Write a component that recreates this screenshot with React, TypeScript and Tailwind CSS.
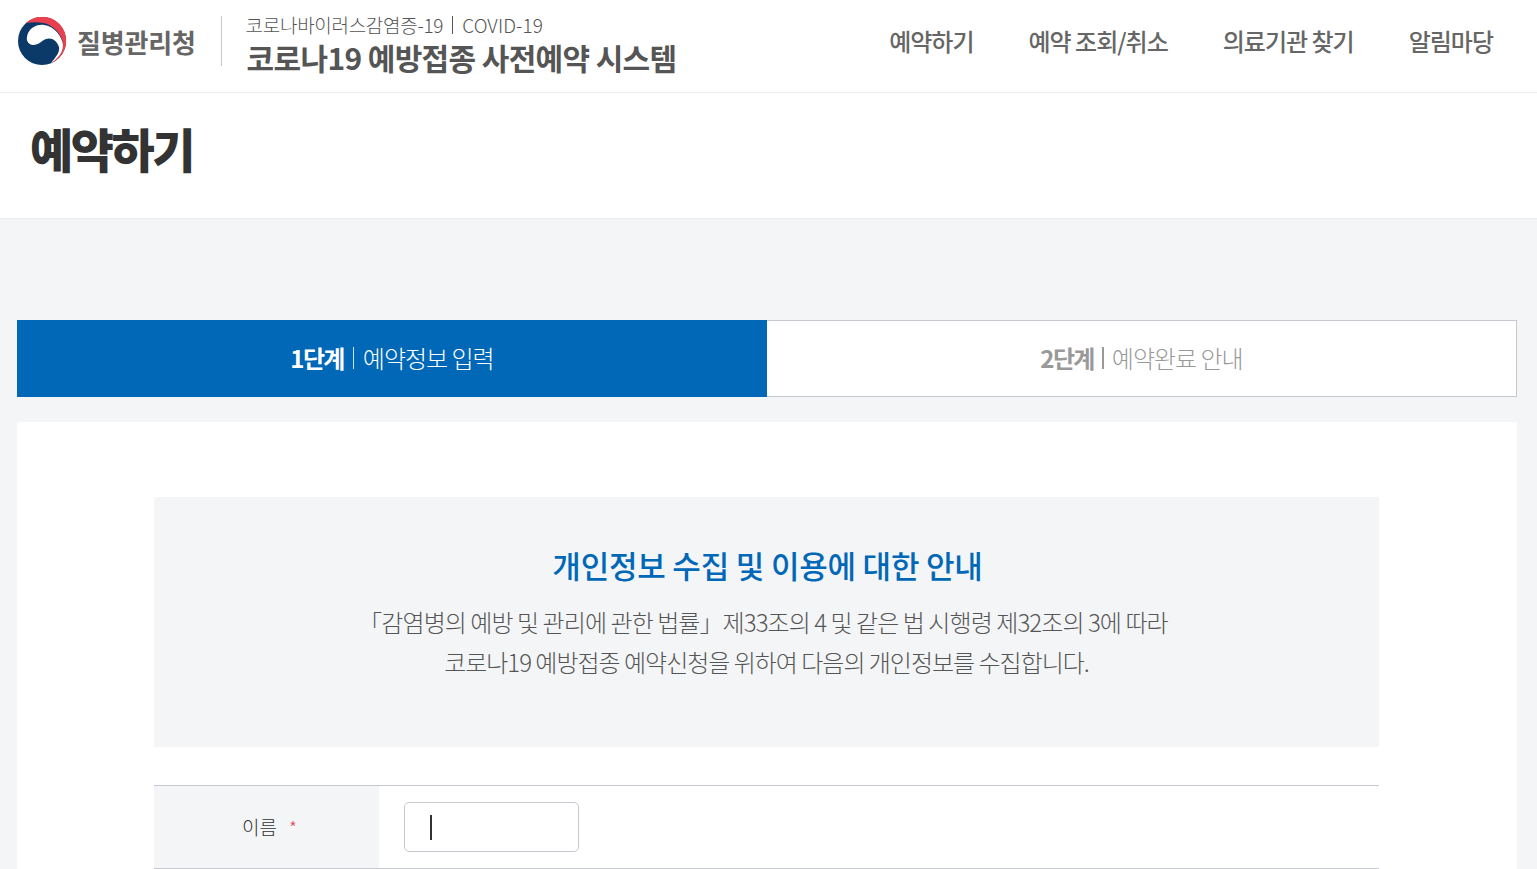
const font = "font-['Noto_Sans_CJK_KR','Noto_Sans',sans-serif]"

const navItems = ["예약하기", "예약 조회/취소", "의료기관 찾기", "알림마당"]

const Logo = () => (
    <svg width="48" height="48" viewBox="0 0 48 48" className="shrink-0">
        <circle cx="24" cy="24" r="24" fill="#0b3a68" />
        <path d="M8 6A24 24 0 1 1 33 46C40 40 45 33 45 27C44 17 35 8 26 6C20 5 14 5 8 6Z" fill="#e8404f" />
        <path d="M9 20C10 12 18 7 26 8C36 9 44 19 45 28C45 36 39 42 33 46C38 40 42 35 41 30C39 23 33 20 28 22C23 24 21 28 15 28C11 28 8 24 9 20Z" fill="#ffffff" />
    </svg>
)

export default function App() {
    return (
        <div className={`${font} h-[869px] overflow-hidden bg-[#f4f5f7] text-[#333]`}>
            <header className="flex h-[93px] items-center justify-between border-b border-[#ebebf0] bg-white pb-[10px] pl-[18px] pr-[44px]">
                <div className="flex items-center">
                    <Logo />
                    <span className="ml-[11px] text-[26px] font-bold tracking-[-0.2px] text-[#666]">질병관리청</span>
                    <div className="ml-[25px] h-[50px] w-px bg-[#c8c8c8]" />
                    <div className="ml-[25px] flex flex-col pt-[6px]">
                        <div className="flex items-center text-[19px] leading-[24px] font-light tracking-[-0.3px] text-[#555]">
                            <span className="-ml-px">코로나바이러스감염증-19</span>
                            <span className="mx-[9px] h-[18px] w-px bg-[#555]" />
                            <span className="tracking-[0.1px]">COVID-19</span>
                        </div>
                        <span className="mt-[2px] text-[30px] leading-[36px] font-bold tracking-[-0.65px] text-[#555]">코로나19 예방접종 사전예약 시스템</span>
                    </div>
                </div>
                <nav className="flex gap-[55px]">
                    {navItems.map((item) => (
                        <a key={item} className="text-[24px] font-medium tracking-[-1px] text-[#666]">{item}</a>
                    ))}
                </nav>
            </header>

            <div className="flex h-[126px] items-center border-b border-[#ebebf0] bg-white pb-[14px] pl-[30px]">
                <h1 className="text-[47px] font-black tracking-[-2.5px] text-[#333]">예약하기</h1>
            </div>

            <div className="px-[17px] pr-[20px] pt-[101px]">
                <div className="flex h-[77px]">
                    <div className="flex w-1/2 items-center justify-center bg-[#0068b7] pb-[2px] text-[24px] tracking-[-1px] text-white">
                        <b className="font-bold tracking-[-1.6px]">1단계</b>
                        <span className="mx-[9px] h-[22px] w-px bg-white/80" />
                        <span className="font-light">예약정보 입력</span>
                    </div>
                    <div className="flex w-1/2 items-center justify-center border border-l-0 border-[#c8c8d0] bg-white pb-[2px] text-[24px] tracking-[-1px] text-[#999]">
                        <b className="font-bold tracking-[-1.6px]">2단계</b>
                        <span className="mx-[8px] h-[22px] w-[2px] bg-[#999]" />
                        <span className="font-light">예약완료 안내</span>
                    </div>
                </div>

                <div className="mt-[25px] bg-white px-[137px] pb-[40px] pr-[138px] pt-[75px]">
                    <section className="flex h-[250px] flex-col items-center bg-[#f4f5f7] pt-[43px]">
                        <h2 className="pl-[2px] text-[31px] leading-[50px] font-medium tracking-[-0.2px] text-[#0068b7]">개인정보 수집 및 이용에 대한 안내</h2>
                        <p className="mt-[12px] pr-[7px] text-[24px] leading-[40px] font-light tracking-[-0.92px] text-[#555]">「감염병의 예방 및 관리에 관한 법률」제33조의 4 및 같은 법 시행령 제32조의 3에 따라</p>
                        <p className="text-[24px] leading-[40px] font-light tracking-[-1px] text-[#555]">코로나19 예방접종 예약신청을 위하여 다음의 개인정보를 수집합니다.</p>
                    </section>

                    <div className="mt-[38px] flex h-[84px] border-y border-[#c8c8d0]">
                        <div className="flex w-[225px] items-center justify-center gap-[12px] bg-[#f4f5f7] pl-[6px] text-[19px] font-light">
                            <span>이름</span>
                            <span className="text-[18px] leading-none text-[#e8404f]">*</span>
                        </div>
                        <div className="flex items-center pl-[25px]">
                            <div className="flex h-[50px] w-[175px] items-center rounded-[5px] border border-[#c8c8d0] bg-white pl-[25px]">
                                <span className="h-[25px] w-[2px] bg-[#333]" />
                            </div>
                        </div>
                    </div>
                </div>
            </div>
        </div>
    )
}
